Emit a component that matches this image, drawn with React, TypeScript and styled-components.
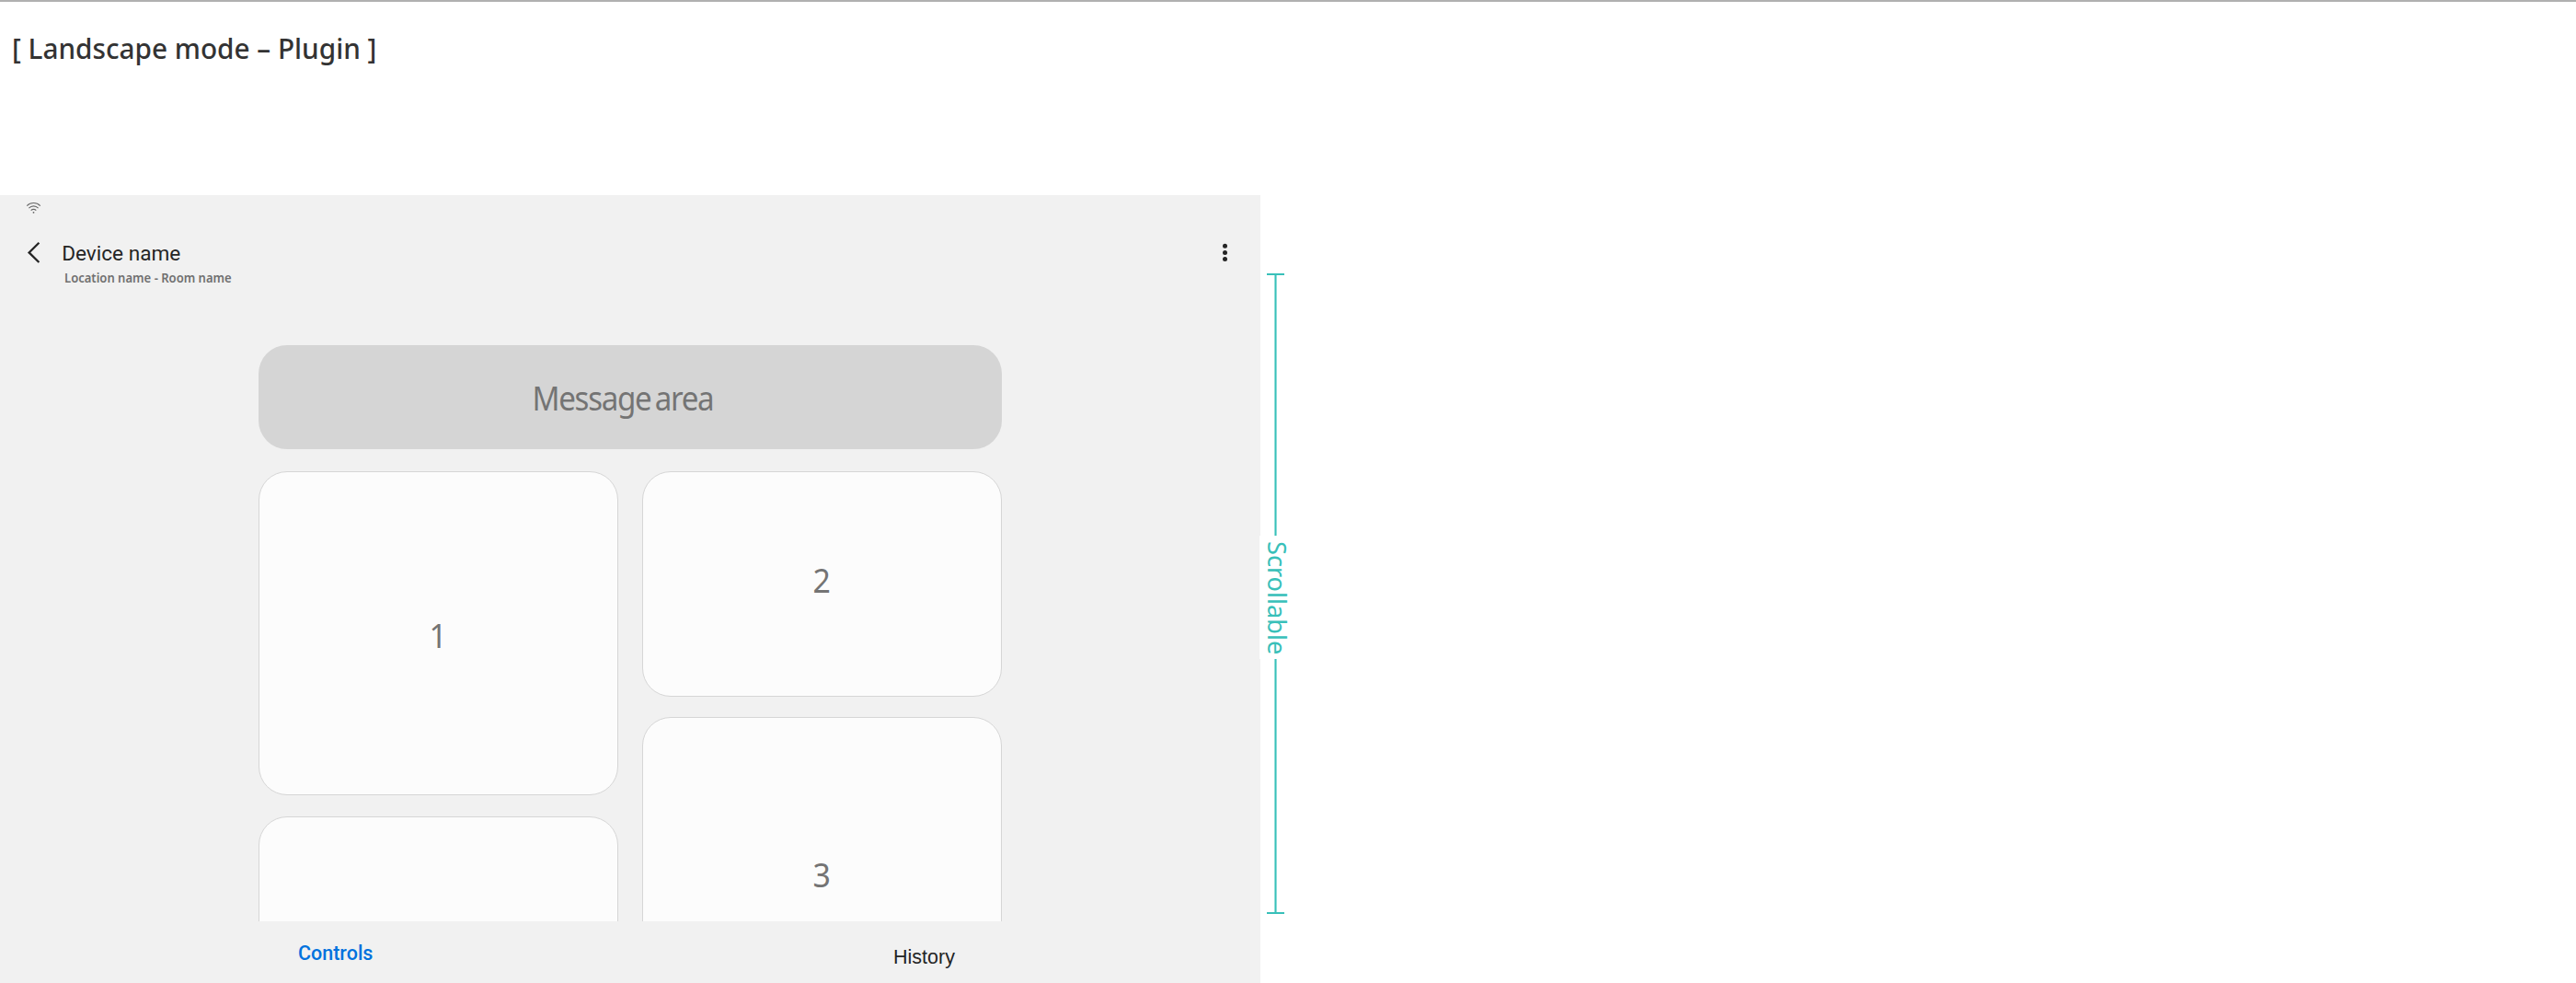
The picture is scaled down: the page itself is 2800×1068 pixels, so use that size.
import React from 'react';
import styled, { createGlobalStyle } from 'styled-components';

const GlobalStyle = createGlobalStyle`
  *, *::before, *::after { box-sizing: border-box; }
  body { margin: 0; background: #fff; }
`;

const sans = '"Noto Sans", "Open Sans", sans-serif';
const roboto = 'Roboto, "Noto Sans", sans-serif';
const arial = '"Liberation Sans", Arial, sans-serif';
const teal = '#38c0b9';

const Page = styled.div`
  width: 2800px;
  height: 1068px;
  display: flex;
  flex-direction: column;
  overflow: hidden;
  background: #fff;
`;

const Header = styled.header`
  flex: none;
  height: 212px;
  border-top: 2px solid #b0b0b0;
  padding: 30px 0 0 12.5px;
`;

const Heading = styled.h1`
  display: inline-block;
  margin: 0;
  font: 500 31px/40px ${sans};
  color: #333;
  white-space: pre;
  transform: scaleX(0.959);
  transform-origin: left;
`;

const Body = styled.main`
  flex: 1;
  min-height: 0;
  display: flex;
`;

const Panel = styled.section`
  width: 1370px;
  background: #f1f1f1;
  display: flex;
  flex-direction: column;
`;

const StatusBar = styled.div`
  height: 38px;
  padding: 7px 0 0 28px;
  svg { display: block; }
`;

const AppBar = styled.div`
  height: 125px;
  display: flex;
  padding: 11px 32px 0 29px;
  svg { display: block; flex: none; }
`;

const Titles = styled.div`
  flex: 1;
  padding: 1px 0 0 21.2px;
`;

const DeviceName = styled.div`
  font: 400 22.6px/28px ${roboto};
  color: #252525;
`;

const Place = styled.div`
  margin: 1px 0 0 2.4px;
  width: max-content;
  font: 600 14.5px/20px ${sans};
  color: #707070;
  transform: scaleX(0.9);
  transform-origin: left;
`;

const Content = styled.div`
  height: 626px;
  padding: 0 281px;
  overflow: hidden;
`;

const Message = styled.div`
  height: 113px;
  border-radius: 31px;
  background: #d5d5d5;
  display: flex;
  align-items: center;
  justify-content: center;
  padding: 3px 17px 0 0;
`;

const MessageText = styled.span`
  font: 400 36px/48px ${sans};
  letter-spacing: -1.45px;
  word-spacing: -3px;
  color: #747474;
  transform: scaleX(0.92);
`;

const Columns = styled.div`
  margin-top: 24px;
  display: flex;
  justify-content: space-between;
`;

const Column = styled.div<{ $gap: number }>`
  width: 391px;
  display: flex;
  flex-direction: column;
  gap: ${p => p.$gap}px;
`;

const Card = styled.div<{ $height: number; $padTop?: number; $padBottom?: number }>`
  height: ${p => p.$height}px;
  flex: none;
  padding: ${p => p.$padTop ?? 0}px 1px ${p => p.$padBottom ?? 0}px 0;
  border: 1px solid #d6d6d6;
  border-radius: 31px;
  background: #fcfcfc;
  display: flex;
  align-items: center;
  justify-content: center;
  font: 400 36px/48px ${sans};
  color: #747474;
  span { transform: scaleX(0.94); }
`;

const TabBar = styled.nav`
  flex: 1;
  display: flex;
  padding-left: 324px;
`;

const Tab = styled.span<{ $active?: boolean }>`
  width: 647px;
  padding-top: ${p => (p.$active ? 22 : 26)}px;
  font: ${p => (p.$active ? `500 21.5px/26px ${roboto}` : `400 21.5px/26px ${arial}`)};
  color: ${p => (p.$active ? '#0072de' : '#252525')};
  &:last-child { width: auto; }
`;

const Rail = styled.aside`
  width: 19px;
  height: 696px;
  margin: 85px 0 0 7px;
  display: flex;
  flex-direction: column;
  align-items: center;
`;

const Cap = styled.div`
  width: 19px;
  height: 2px;
  flex: none;
  background: ${teal};
`;

const Stem = styled.div<{ $height: number }>`
  width: 3px;
  height: ${p => p.$height}px;
  flex: none;
  border: solid #8edcd8;
  border-width: 0 1px;
  background: ${teal};
`;

const RailLabel = styled.div`
  align-self: flex-start;
  flex: none;
  width: 40px;
  height: 134px;
  margin-left: -8px;
  padding-top: 5.5px;
  background: #fff;
  writing-mode: vertical-rl;
  font: 400 28px/40px ${sans};
  color: ${teal};
  span {
    display: inline-block;
    transform: scaleY(0.97);
    transform-origin: top;
  }
`;

const WifiIcon = () => (
  <svg width="17" height="14" viewBox="0 0 17 14" fill="none" stroke="#6a6a6a" strokeWidth="1.1">
    <path d="M1.2 4.6C5.2 0.4 11.8 0.4 15.8 4.6" />
    <path d="M3.4 7.2C6.2 4.1 10.8 4.1 13.6 7.2" />
    <path d="M5.7 9.6C7.3 7.9 9.7 7.9 11.3 9.6" />
    <circle cx="8.5" cy="11.8" r="0.9" fill="#606060" stroke="none" />
  </svg>
);

const BackIcon = () => (
  <svg width="17" height="26" viewBox="0 0 17 26" fill="none" stroke="#252525" strokeWidth="2.3">
    <path d="M13.4 2.8L2.6 13.4L13.4 24" />
  </svg>
);

const MoreIcon = () => (
  <svg width="14" height="26" viewBox="0 0 14 26" fill="#252525">
    <circle cx="7.5" cy="6.3" r="2.5" />
    <circle cx="7.5" cy="13.4" r="2.5" />
    <circle cx="7.5" cy="20.6" r="2.5" />
  </svg>
);

export default function App() {
  return (
    <Page>
      <GlobalStyle />
      <Header>
        <Heading>[ Landscape mode – Plugin ]</Heading>
      </Header>
      <Body>
        <Panel>
          <StatusBar>
            <WifiIcon />
          </StatusBar>
          <AppBar>
            <BackIcon />
            <Titles>
              <DeviceName>Device name</DeviceName>
              <Place>Location name - Room name</Place>
            </Titles>
            <MoreIcon />
          </AppBar>
          <Content>
            <Message>
              <MessageText>Message area</MessageText>
            </Message>
            <Columns>
              <Column $gap={23}>
                <Card $height={352} $padTop={5}><span>1</span></Card>
                <Card $height={300} />
              </Column>
              <Column $gap={22}>
                <Card $height={245} $padBottom={7}><span>2</span></Card>
                <Card $height={342} $padTop={2}><span>3</span></Card>
              </Column>
            </Columns>
          </Content>
          <TabBar>
            <Tab $active>Controls</Tab>
            <Tab>History</Tab>
          </TabBar>
        </Panel>
        <Rail>
          <Cap />
          <Stem $height={283} />
          <RailLabel>
            <span>Scrollable</span>
          </RailLabel>
          <Stem $height={275} />
          <Cap />
        </Rail>
      </Body>
    </Page>
  );
}
